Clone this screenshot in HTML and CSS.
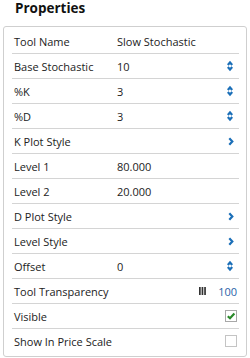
FILE: index.html
```html
<!DOCTYPE html>
<html>
<head>
<meta charset="utf-8">
<link rel="stylesheet" href="styles.css">
</head>
<body>
<h1 class="title">Properties</h1>
<div class="panel">
  <div class="row"><span class="label">Tool Name</span><span class="value">Slow Stochastic</span></div>
  <div class="row"><span class="label">Base Stochastic</span><span class="value">10</span><span class="ctl"><svg class="spin" width="6" height="12" viewBox="0 0 6 12"><polyline points="0.8,4.9 3,2.4 5.2,4.9"/><polyline points="0.8,7.1 3,9.6 5.2,7.1"/></svg></span></div>
  <div class="row"><span class="label">%K</span><span class="value">3</span><span class="ctl"><svg class="spin" width="6" height="12" viewBox="0 0 6 12"><polyline points="0.8,4.9 3,2.4 5.2,4.9"/><polyline points="0.8,7.1 3,9.6 5.2,7.1"/></svg></span></div>
  <div class="row"><span class="label">%D</span><span class="value">3</span><span class="ctl"><svg class="spin" width="6" height="12" viewBox="0 0 6 12"><polyline points="0.8,4.9 3,2.4 5.2,4.9"/><polyline points="0.8,7.1 3,9.6 5.2,7.1"/></svg></span></div>
  <div class="row"><span class="label">K Plot Style</span><span class="value"></span><span class="ctl"><svg class="chev" width="6" height="9" viewBox="0 0 6 9"><polyline points="1.3,1.3 4.3,4.5 1.3,7.7"/></svg></span></div>
  <div class="row"><span class="label">Level 1</span><span class="value">80.000</span></div>
  <div class="row"><span class="label">Level 2</span><span class="value">20.000</span></div>
  <div class="row"><span class="label">D Plot Style</span><span class="value"></span><span class="ctl"><svg class="chev" width="6" height="9" viewBox="0 0 6 9"><polyline points="1.3,1.3 4.3,4.5 1.3,7.7"/></svg></span></div>
  <div class="row"><span class="label">Level Style</span><span class="value"></span><span class="ctl"><svg class="chev" width="6" height="9" viewBox="0 0 6 9"><polyline points="1.3,1.3 4.3,4.5 1.3,7.7"/></svg></span></div>
  <div class="row"><span class="label">Offset</span><span class="value">0</span><span class="ctl"><svg class="spin" width="6" height="12" viewBox="0 0 6 12"><polyline points="0.8,4.9 3,2.4 5.2,4.9"/><polyline points="0.8,7.1 3,9.6 5.2,7.1"/></svg></span></div>
  <div class="row"><span class="label wide">Tool Transparency</span><span class="value"></span><span class="trans"><svg class="bars" width="7" height="8" viewBox="0 0 7 8"><rect x="0" y="0" width="1.7" height="8"/><rect x="2.6" y="0" width="1.7" height="8"/><rect x="5.2" y="0" width="1.7" height="8"/></svg><span class="pct">100</span></span></div>
  <div class="row"><span class="label">Visible</span><span class="value"></span><span class="ctl"><span class="box checked"><svg width="10" height="10" viewBox="0 0 10 10"><polyline points="1.8,5.2 4,7.3 8.4,2.6"/></svg></span></span></div>
  <div class="row last"><span class="label wide">Show In Price Scale</span><span class="value"></span><span class="ctl"><span class="box"></span></span></div>
</div>
</body>
</html>
```
FILE: styles.css
```css
html, body {
  margin: 0;
  padding: 0;
  background: #ffffff;
}
body {
  font-family: "Open Sans", "Noto Sans", sans-serif;
  color: #222;
  width: 250px;
}
.title {
  margin: 0 0 9px 0;
  padding: 0 0 0 15px;
  font-size: 13.5px;
  line-height: 17px;
  font-weight: 700;
  color: #111;
}
.panel {
  margin: 0 3px;
  border: 1px solid #cfcfcf;
  border-radius: 3px;
  padding: 2px 0 3px 0;
}
.row {
  display: flex;
  align-items: center;
  height: 24px;
  margin: 0 7px 0 8px;
  padding: 0 2px;
  border-bottom: 1px solid #d4d4d4;
  font-size: 11px;
  line-height: 15px;
}
.row.last {
  border-bottom: none;
}
.label {
  width: 103px;
  flex: none;
  white-space: nowrap;
}
.value {
  flex: 1;
  white-space: nowrap;
}
.ctl {
  width: 12px;
  height: 12px;
  display: flex;
  align-items: center;
  justify-content: center;
}
.spin {
  display: block;
  margin-right: 2px;
}
.spin polyline, .chev polyline {
  fill: none;
  stroke: #1b6fb8;
  stroke-width: 2.2;
  stroke-linecap: butt;
  stroke-linejoin: miter;
}
.chev {
  display: block;
}
.trans {
  display: flex;
  align-items: center;
}
.bars {
  display: block;
  fill: #333;
  margin-right: 12px;
}
.pct {
  color: #2a62a8;
}
.box {
  width: 10px;
  height: 10px;
  border: 1px solid #c4c4c4;
  background: #fff;
  display: flex;
  align-items: center;
  justify-content: center;
}
.box svg {
  display: block;
}
.box polyline {
  fill: none;
  stroke: #2a8a2a;
  stroke-width: 2.2;
}
.box.checked {
  border-color: #a8a8a8;
}
```
